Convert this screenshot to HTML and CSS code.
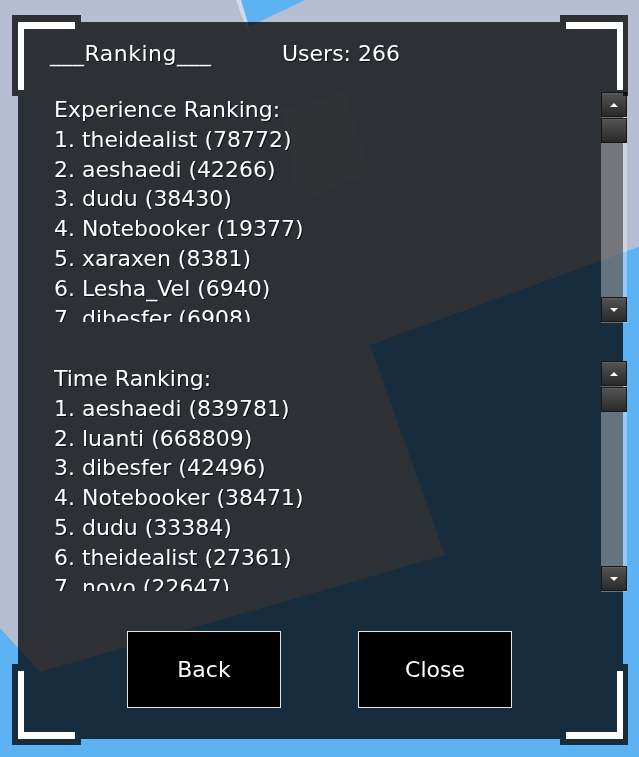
FILE: index.html
```html
<!DOCTYPE html>
<html lang="en">
<head>
<meta charset="utf-8">
<title>Ranking</title>
<link rel="stylesheet" href="styles.css">
</head>
<body>
<svg class="bg" width="639" height="757" viewBox="0 0 639 757" aria-hidden="true">
  <rect x="0" y="0" width="639" height="757" fill="#b5bed2"/>
  <polygon points="282,110 345,92 370,173 298,203" fill="#bfc6d7"/>
  <polygon points="-20,606 40,672 445,555 370,345 660,239 660,780 -20,780" fill="#5db2f3"/>
  <polygon points="240,0 305,0 248,27" fill="#5db2f3"/>
  <polygon points="236,0 241,0 249,27 246,27" fill="#d3dcec"/>
</svg>

<main class="panel">
  <header class="title-row">
    <span class="title">___Ranking___</span>
    <span class="users">Users: 266</span>
  </header>

  <section class="list list-exp">
    <div class="list-text">
      <div>Experience Ranking:</div>
      <div>1. theidealist (78772)</div>
      <div>2. aeshaedi (42266)</div>
      <div>3. dudu (38430)</div>
      <div>4. Notebooker (19377)</div>
      <div>5. xaraxen (8381)</div>
      <div>6. Lesha_Vel (6940)</div>
      <div>7. dibesfer (6908)</div>
      <div>8. luanti (5211)</div>
    </div>
    <div class="scrollbar">
      <div class="sb-btn sb-up"><span class="arrow-up"></span></div>
      <div class="sb-btn sb-thumb"></div>
      <div class="sb-btn sb-down"><span class="arrow-down"></span></div>
    </div>
  </section>

  <section class="list list-time">
    <div class="list-text">
      <div>Time Ranking:</div>
      <div>1. aeshaedi (839781)</div>
      <div>2. luanti (668809)</div>
      <div>3. dibesfer (42496)</div>
      <div>4. Notebooker (38471)</div>
      <div>5. dudu (33384)</div>
      <div>6. theidealist (27361)</div>
      <div>7. novo (22647)</div>
      <div>8. xaraxen (12011)</div>
    </div>
    <div class="scrollbar">
      <div class="sb-btn sb-up"><span class="arrow-up"></span></div>
      <div class="sb-btn sb-thumb"></div>
      <div class="sb-btn sb-down"><span class="arrow-down"></span></div>
    </div>
  </section>

  <footer class="buttons">
    <button class="btn" type="button">Back</button>
    <button class="btn" type="button">Close</button>
  </footer>
</main>

<div class="corner corner-tl"><span class="corner-l"></span></div>
<div class="corner corner-tr"><span class="corner-l"></span></div>
<div class="corner corner-bl"><span class="corner-l"></span></div>
<div class="corner corner-br"><span class="corner-l"></span></div>
</body>
</html>
```

FILE: styles.css
```css
html, body {
  margin: 0;
  padding: 0;
}

body {
  width: 639px;
  height: 757px;
  overflow: hidden;
  padding: 22px 0 0 18px;
  box-sizing: border-box;
  font-family: "DejaVu Sans", "Noto Sans", sans-serif;
  font-size: 22px;
  color: #ffffff;
}

.bg {
  position: fixed;
  left: 0;
  top: 0;
  z-index: -1;
  display: block;
}

.panel {
  width: 605px;
  height: 717px;
  background: rgba(0, 0, 0, 0.75);
  display: flex;
  flex-direction: column;
}

.title-row,
.list-text,
.btn {
  text-shadow: 1px 1px 0 rgba(0, 0, 0, 0.7);
}

.title-row {
  height: 70px;
  box-sizing: border-box;
  padding: 17px 0 0 32px;
  line-height: 30px;
  display: flex;
  flex: none;
}

.title {
  width: 232px;
  letter-spacing: 0.5px;
}

.list {
  display: flex;
  height: 231px;
  flex: none;
  padding-left: 36px;
}

.list-time {
  margin-top: 38px;
}

.list-text {
  flex: 1;
  height: 230px;
  overflow: hidden;
  padding-top: 3px;
  box-sizing: border-box;
  line-height: 29.8px;
  white-space: nowrap;
}

.scrollbar {
  flex: none;
  width: 26px;
  margin-right: -4px;
  background: rgba(255, 255, 255, 0.34);
  display: flex;
  flex-direction: column;
}

.sb-btn {
  height: 25px;
  box-sizing: border-box;
  border: 1px solid #161616;
  background: linear-gradient(#535353, #2a2a2a);
  box-shadow: inset 0 1px 0 rgba(255, 255, 255, 0.08);
  display: flex;
  align-items: center;
  justify-content: center;
}

.sb-thumb {
  margin-top: 1px;
}

.sb-down {
  margin-top: auto;
  margin-bottom: 1px;
}

.arrow-up,
.arrow-down {
  width: 0;
  height: 0;
  border-left: 4px solid transparent;
  border-right: 4px solid transparent;
}

.arrow-up {
  border-bottom: 4px solid #ffffff;
}

.arrow-down {
  border-top: 4px solid #ffffff;
}

.buttons {
  display: flex;
  gap: 77px;
  padding-left: 109px;
  margin-top: 39px;
}

.btn {
  width: 154px;
  height: 77px;
  margin: 0;
  padding: 0 0 1px 0;
  background: #000000;
  border: 1px solid #e6e6e6;
  color: #ffffff;
  font-family: inherit;
  font-size: 22px;
}

/* corner brackets overlaying the panel */
.corner {
  position: absolute;
  box-sizing: border-box;
  display: flex;
  border: 0 solid rgba(0, 0, 0, 0.75);
}

.corner-l {
  width: 57px;
  height: 68px;
  box-sizing: border-box;
  border: 0 solid #ffffff;
}

.corner-tl {
  left: 12px;
  top: 15px;
  width: 69px;
  height: 81px;
  border-top-width: 7px;
  border-left-width: 6px;
}

.corner-tl .corner-l {
  border-top-width: 7px;
  border-left-width: 6px;
}

.corner-tr {
  left: 560px;
  top: 15px;
  width: 68px;
  height: 81px;
  border-top-width: 7px;
  border-right-width: 5px;
  justify-content: flex-end;
}

.corner-tr .corner-l {
  border-top-width: 7px;
  border-right-width: 6px;
}

.corner-bl {
  left: 12px;
  top: 664px;
  width: 69px;
  height: 81px;
  border-left-width: 6px;
  border-bottom-width: 6px;
  align-items: flex-end;
}

.corner-bl .corner-l {
  border-left-width: 6px;
  border-bottom-width: 7px;
}

.corner-br {
  left: 560px;
  top: 664px;
  width: 68px;
  height: 81px;
  border-right-width: 5px;
  border-bottom-width: 6px;
  justify-content: flex-end;
  align-items: flex-end;
}

.corner-br .corner-l {
  border-right-width: 6px;
  border-bottom-width: 7px;
}
```
